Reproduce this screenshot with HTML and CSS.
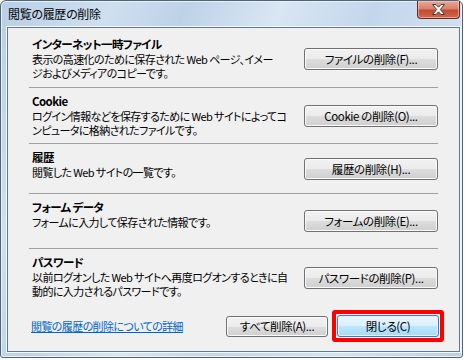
FILE: index.html
```html
<!DOCTYPE html>
<html lang="ja">
<head>
    <meta charset="UTF-8">
    <title>閲覧の履歴の削除</title>
    <link rel="stylesheet" href="styles.css">
</head>
<body>
    <div class="window">
        <div class="titlebar">
            <span class="title">閲覧の履歴の削除</span>
            <button class="close" type="button" aria-label="閉じる">
                <svg width="15" height="11" viewBox="0 0 15 11">
                    <path d="M1.5 0.5h3.5l2.5 2.7 2.5-2.7h3.5l-4.2 5 4.2 5h-3.5l-2.5-2.7-2.5 2.7h-3.5l4.2-5z" fill="#fff" stroke="#4a3a38" stroke-width="1"/>
                </svg>
            </button>
        </div>

        <div class="client">
            <div class="groups">
                <div class="group">
                    <div class="text">
                        <h3>インターネット一時ファイル</h3>
                        <p>表示の高速化のために保存された Web ページ、イメー<br>ジおよびメディアのコピーです。</p>
                    </div>
                    <button class="btn" type="button">ファイルの削除(F)...</button>
                </div>
                <div class="group">
                    <div class="text">
                        <h3>Cookie</h3>
                        <p>ログイン情報などを保存するために Web サイトによってコ<br>ンピュータに格納されたファイルです。</p>
                    </div>
                    <button class="btn" type="button">Cookie の削除(O)...</button>
                </div>
                <div class="group">
                    <div class="text">
                        <h3>履歴</h3>
                        <p>閲覧した Web サイトの一覧です。</p>
                    </div>
                    <button class="btn" type="button">履歴の削除(H)...</button>
                </div>
                <div class="group">
                    <div class="text">
                        <h3>フォーム データ</h3>
                        <p>フォームに入力して保存された情報です。</p>
                    </div>
                    <button class="btn" type="button">フォームの削除(E)...</button>
                </div>
                <div class="group last">
                    <div class="text">
                        <h3>パスワード</h3>
                        <p>以前ログオンした Web サイトへ再度ログオンするときに自<br>動的に入力されるパスワードです。</p>
                    </div>
                    <button class="btn" type="button">パスワードの削除(P)...</button>
                </div>
            </div>

            <div class="footer">
                <a class="more" href="#">閲覧の履歴の削除についての詳細</a>
                <button class="btn btn-all" type="button">すべて削除(A)...</button>
                <div class="highlight">
                    <button class="btn btn-default" type="button">閉じる(C)</button>
                </div>
            </div>
        </div>
    </div>
</body>
</html>
```

FILE: styles.css
```css
body {
    margin: 0;
    background: #fff;
    font-family: "Noto Sans CJK JP", sans-serif;
    font-size: 11px;
    letter-spacing: -0.6px;
    font-feature-settings: "palt";
    color: #000;
}

.window {
    width: 461px;
    height: 356px;
    border: 1px solid #4e6479;
    border-radius: 6px 6px 3px 3px;
    background: linear-gradient(115deg, #b8cfe6 0%, #cfdff0 18%, #bdd2e8 30%, #d9e6f3 45%, #c3d7ec 60%, #d4e3f2 80%, #bad0e7 100%);
    box-shadow: inset 0 0 0 1px #e9f1f9;
    display: flex;
    flex-direction: column;
}

.titlebar {
    height: 26px;
    display: flex;
    align-items: flex-start;
}

.title {
    margin: 5px 0 0 7px;
    font-size: 12px;
    letter-spacing: -0.3px;
    line-height: 16px;
    color: #000;
}

.close {
    margin: 0 2px 0 auto;
    width: 43px;
    height: 18px;
    padding: 0;
    border: 1px solid #6b2a20;
    border-top: none;
    border-radius: 0 0 4px 4px;
    background: linear-gradient(#e8a898 0%, #d7826e 45%, #c44a32 55%, #cf6a4e 100%);
    box-shadow: inset 0 0 0 1px rgba(255, 220, 210, 0.5);
    display: flex;
    align-items: center;
    justify-content: center;
}

.client {
    margin: 0 0 0 6px;
    width: 451px;
    height: 323px;
    border: 1px solid #64788c;
    background: #f0f0f0;
    box-shadow: 0 0 0 1px #f4f8fc;
}

.groups {
    margin: 0 21px;
    padding-top: 3px;
    display: grid;
    grid-template-rows: 57px 56px 50px 55px 58px;
}

.group {
    display: flex;
    justify-content: space-between;
    align-items: center;
    border-bottom: 1px solid #a0a0a0;
}

.group.last {
    border-bottom: none;
}

.text {
    align-self: flex-start;
    padding: 5px 0 0 3px;
    white-space: nowrap;
}

.text h3 {
    margin: 0;
    font-size: 11.5px;
    font-weight: bold;
    line-height: 16px;
}

.text p {
    margin: 0;
    line-height: 14px;
}

.btn {
    flex-shrink: 0;
    width: 134px;
    height: 22px;
    padding: 0;
    border: 1px solid #707070;
    border-radius: 3px;
    background: linear-gradient(#f2f2f2 0%, #ebebeb 50%, #dddddd 51%, #cfcfcf 100%);
    box-shadow: inset 0 0 0 1px #fbfbfb;
    font-family: inherit;
    font-size: 11.5px;
    letter-spacing: -0.4px;
    font-feature-settings: "palt";
    color: #000;
}

.footer {
    margin-top: 3px;
    padding: 0 15px 0 23px;
    display: flex;
    align-items: center;
}

.more {
    color: #0066cc;
    text-decoration: underline;
    margin-right: auto;
}

.btn-all {
    width: 102px;
    height: 21px;
    margin-right: 4px;
}

.highlight {
    border: 4px solid #ff0000;
    border-radius: 3px;
    padding: 1px;
}

.btn-default {
    width: 102px;
    border-color: #3c7fb1;
    background: linear-gradient(#eaf6fd 0%, #d9f0fc 50%, #bee6fd 51%, #a7d9f5 100%);
    box-shadow: inset 0 0 0 1px #e2f3fc;
}
```
